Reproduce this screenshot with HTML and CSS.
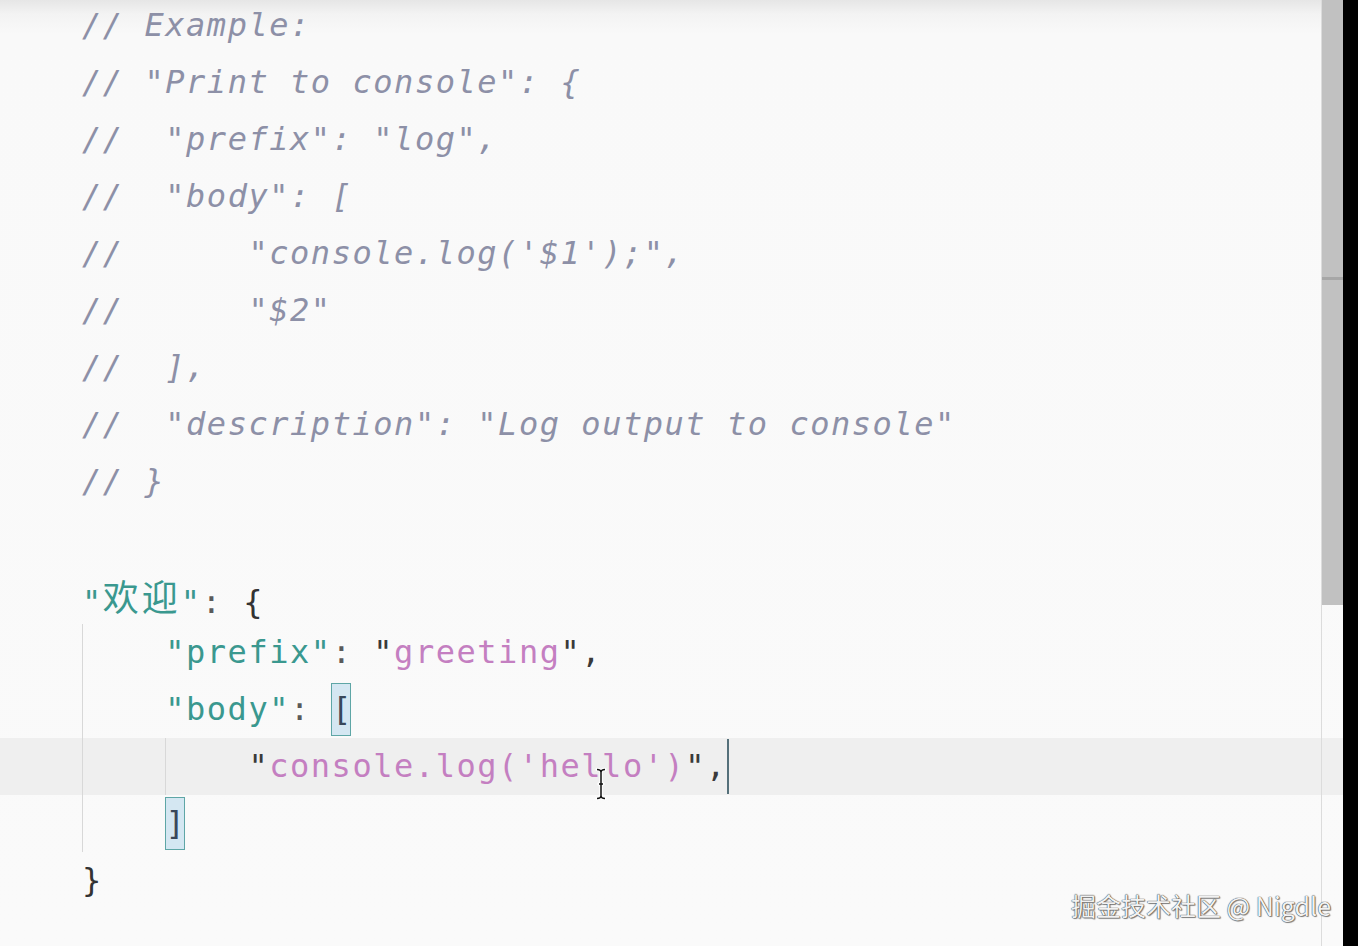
FILE: index.html
```html
<!DOCTYPE html>
<html lang="zh-CN">
<head>
<meta charset="utf-8">
<title>snippets</title>
<link rel="stylesheet" href="styles.css">
</head>
<body>
<div class="screen">
  <div class="editor">
    <div class="code">
      <div class="line cm">// Example:</div>
      <div class="line cm">// "Print to console": {</div>
      <div class="line cm">//  "prefix": "log",</div>
      <div class="line cm">//  "body": [</div>
      <div class="line cm">//      "console.log('$1');",</div>
      <div class="line cm">//      "$2"</div>
      <div class="line cm">//  ],</div>
      <div class="line cm">//  "description": "Log output to console"</div>
      <div class="line cm">// }</div>
      <div class="line"> </div>
      <div class="line"><span class="key">"<span class="cjk">欢迎</span>"</span><span class="pun">: </span><span class="brace">{</span></div>
      <div class="line"><span class="ind"></span><span class="key">"prefix"</span><span class="pun">: </span><span class="q">"</span><span class="str">greeting</span><span class="q">",</span></div>
      <div class="line"><span class="ind"></span><span class="key">"body"</span><span class="pun">: </span><span class="bm">[</span></div>
      <div class="line current"><span class="ind"></span><span class="ind"></span><span class="q">"</span><span class="str">console.log('hello')</span><span class="q">",</span><span class="caret"></span></div>
      <div class="line"><span class="ind"></span><span class="bm">]</span></div>
      <div class="line"><span class="brace">}</span></div>
    </div>

    <div class="scrollbar">
      <div class="thumb"><div class="marker"></div></div>
    </div>

    <svg class="ibeam" width="14" height="34" viewBox="0 0 14 34" aria-hidden="true">
      <path d="M3 2.5 Q7 2.5 7 5.5 Q7 2.5 11 2.5 M7 5.5 V28.5 M3 31.5 Q7 31.5 7 28.5 Q7 31.5 11 31.5 M5 17 H9" stroke="#ffffff" stroke-width="3.4" fill="none" stroke-linecap="round"/>
      <path d="M3 2.5 Q7 2.5 7 5.5 Q7 2.5 11 2.5 M7 5.5 V28.5 M3 31.5 Q7 31.5 7 28.5 Q7 31.5 11 31.5 M5 17 H9" stroke="#111111" stroke-width="1.5" fill="none"/>
    </svg>

    <div class="wm">掘金技术社区 @ Nigdle</div>
  </div>
  <div class="edge"></div>
</div>
</body>
</html>
```

FILE: styles.css
```css
* {
  box-sizing: border-box;
}

html,
body {
  margin: 0;
  padding: 0;
}

body {
  width: 1358px;
  height: 946px;
  overflow: hidden;
  background: #000;
}

.screen {
  display: flex;
  height: 946px;
}

.editor {
  position: relative;
  flex: 0 0 1343px;
  height: 946px;
  overflow: hidden;
  background: linear-gradient(to bottom, #e6e6e6 0, #f3f3f3 14px, #f9f9f9 34px, #fafafa 100%);
}

.edge {
  flex: 1 1 auto;
  background: #000;
}

.code {
  margin-top: -3px;
  font-family: "DejaVu Sans Mono", "Noto Sans CJK SC", monospace;
  font-size: 32px;
  letter-spacing: 1.54px;
  color: #4a4a4a;
}

.line {
  height: 57px;
  line-height: 57px;
  padding-left: 82px;
  white-space: pre;
}

.line.current {
  background: #efefef;
}

.cm {
  font-style: italic;
  color: #8d90a7;
}

.key {
  color: #3a988f;
}

.cjk {
  font-family: "Noto Sans CJK SC", sans-serif;
  font-size: 36px;
  letter-spacing: 3px;
  vertical-align: 2px;
}

.pun {
  color: #5a5a5a;
}

.brace {
  color: #333;
}

.q {
  color: #3a3a3a;
}

.str {
  color: #c47fc1;
}

.ind {
  display: inline-block;
  width: 83.2px;
  height: 57px;
  vertical-align: top;
  border-left: 1px solid #d8d8d8;
}

.bm {
  display: inline-block;
  width: 20px;
  height: 53px;
  line-height: 51px;
  margin-left: -0.6px;
  margin-right: 1.4px;
  letter-spacing: 0;
  text-align: center;
  color: #39485a;
  background: #d4e7f2;
  border: 1px solid #5ea6a6;
}

.caret {
  display: inline-block;
  width: 2px;
  height: 55px;
  margin-top: 1px;
  vertical-align: top;
  background: #55707a;
}

.scrollbar {
  position: absolute;
  top: 0;
  right: 0;
  width: 22px;
  height: 946px;
  border-left: 1px solid #dcdcdc;
}

.thumb {
  position: relative;
  height: 605px;
  background: #c1c1c1;
}

.marker {
  position: absolute;
  left: 0;
  right: 0;
  top: 277px;
  height: 3px;
  background: #a7a7a7;
}

.ibeam {
  position: absolute;
  left: 594px;
  top: 767px;
}

.wm {
  position: absolute;
  left: 1071px;
  top: 891px;
  font-family: "Noto Sans CJK SC", "Noto Sans", sans-serif;
  font-size: 25px;
  line-height: 28px;
  color: #f2f2f2;
  white-space: nowrap;
  text-shadow: 0 0 1px #3c3c3c, 0 0 1px #3c3c3c, 1px 1px 1px rgba(0, 0, 0, 0.45);
}
```
